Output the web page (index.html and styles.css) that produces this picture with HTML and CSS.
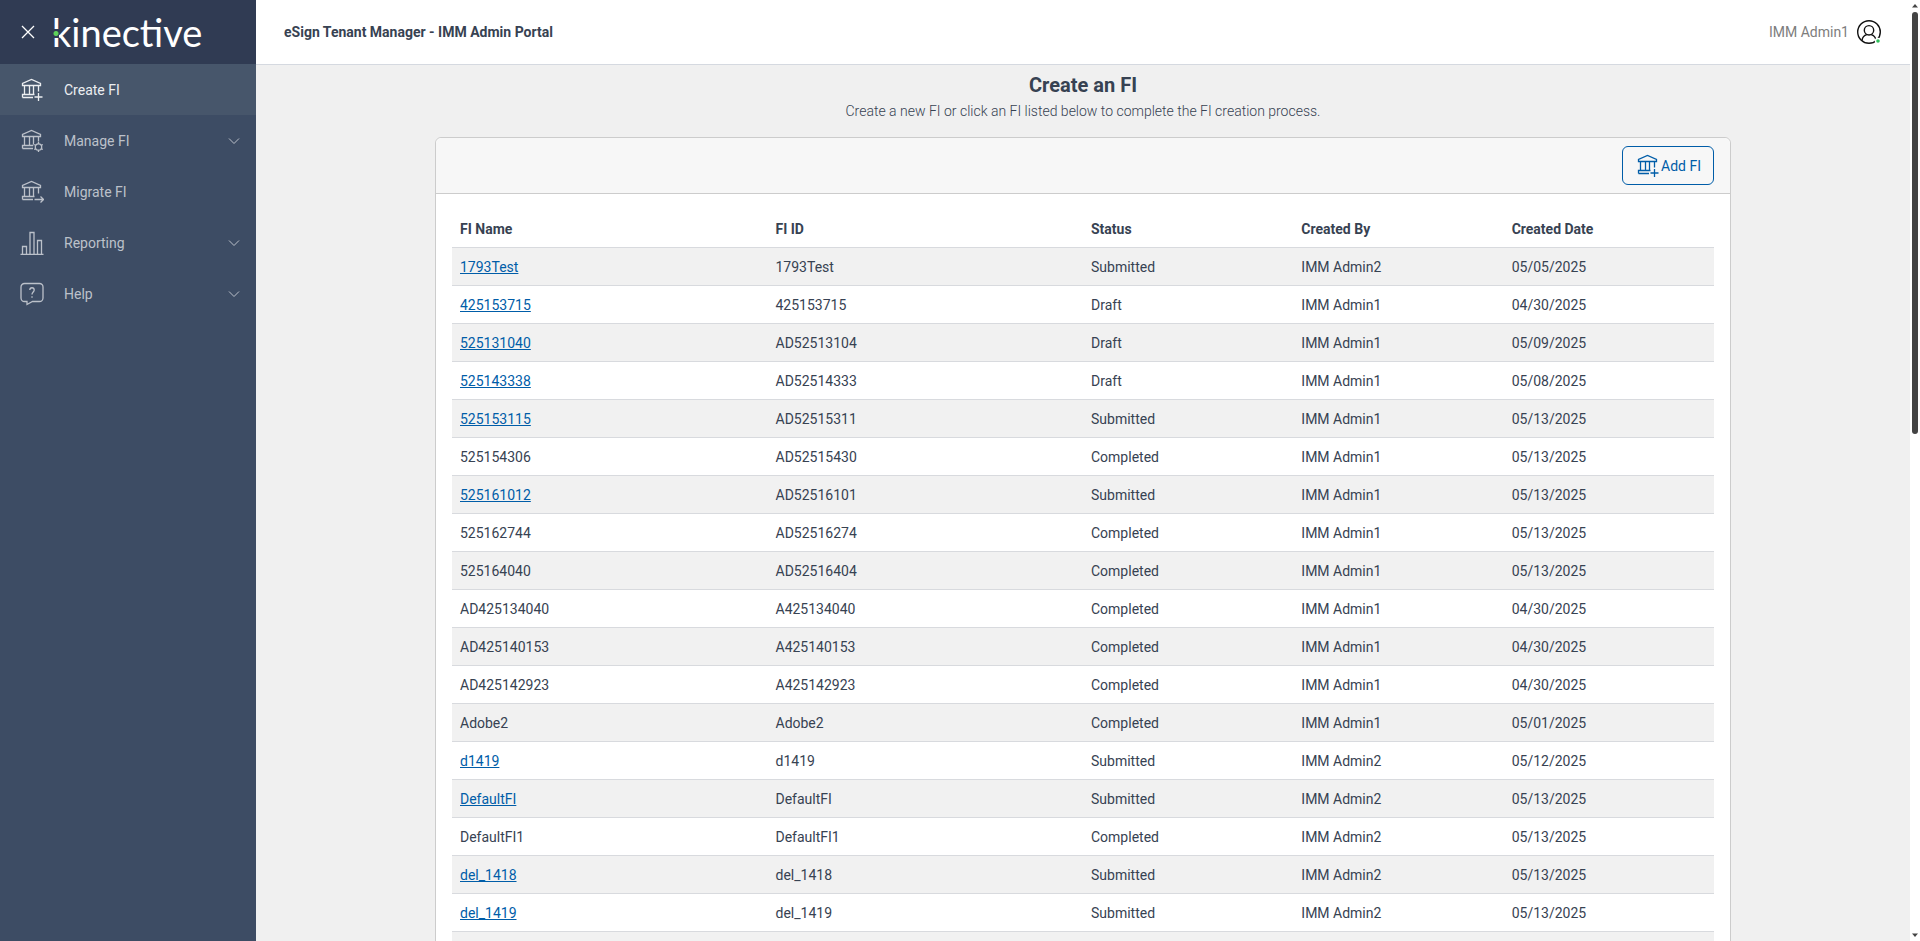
FILE: index.html
```html
<!DOCTYPE html>
<html lang="en">
<head>
  <meta charset="UTF-8">
  <title>eSign Tenant Manager</title>
  <link rel="stylesheet" href="styles.css">
</head>
<body>
  <svg class="symbols" aria-hidden="true">
    <symbol id="bank" viewBox="0 0 24 24">
      <path d="M2.500 7.500V5.500L11.500 1.500L20.500 5.500V7.500ZM4.500 7.500V16.500M9.500 7.500V16.500M13.500 7.500V16.500M18.500 7.500V13.500M2.500 19.500V16.500H14.500M2.500 19.500H13"/>
    </symbol>
    <symbol id="bank-plus" viewBox="0 0 24 24">
      <use href="#bank"/>
      <path d="M18.500 15V23M14.500 19H22.500"/>
    </symbol>
    <symbol id="chevron" viewBox="0 0 12 8">
      <path d="M1 1.5L6 6.5L11 1.5"/>
    </symbol>
  </svg>

  <nav class="sidebar">
    <div class="brand">
      <button class="close" aria-label="Close menu">
        <svg viewBox="0 0 14 14"><path d="M1 1L13 13M13 1L1 13"/></svg>
      </button>
      <a class="logo" href="#">kinective</a>
    </div>
    <a class="nav-item active" href="#">
      <svg class="icon"><use href="#bank-plus"/></svg>
      <span>Create FI</span>
    </a>
    <a class="nav-item" href="#">
      <svg class="icon" viewBox="0 0 24 24">
        <use href="#bank"/>
        <circle class="cutout" cx="18.500" cy="18" r="5.500"/>
        <path d="M18.500 13V15M18.500 21V23M14.200 15.500L16 16.500M21 19.500L22.800 20.500M14.200 20.500L16 19.500M21 16.500L22.800 15.500"/>
        <circle cx="18.500" cy="18" r="3.200"/>
      </svg>
      <span>Manage FI</span>
      <svg class="chevron"><use href="#chevron"/></svg>
    </a>
    <a class="nav-item" href="#">
      <svg class="icon" viewBox="0 0 24 24">
        <use href="#bank"/>
        <path d="M14.500 19.500H23.500M20.500 16.500L23.500 19.500L20.500 22.500"/>
      </svg>
      <span>Migrate FI</span>
    </a>
    <a class="nav-item" href="#">
      <svg class="icon" viewBox="0 0 24 24">
        <path d="M.5 23.500H23.500M2.500 23.500V15.500H6.500V23.500M10 23.500V1.500H14V23.500M17.500 23.500V9.500H21.500V23.500"/>
      </svg>
      <span>Reporting</span>
      <svg class="chevron"><use href="#chevron"/></svg>
    </a>
    <a class="nav-item" href="#">
      <svg class="icon" viewBox="0 0 24 24">
        <path d="M4.500 1.500H19.500A3.500 3.500 0 0 1 23 5V16A3.500 3.500 0 0 1 19.500 19.500H12.500L7 22.500V19.500H4.500A3.500 3.500 0 0 1 1 16V5A3.500 3.500 0 0 1 4.500 1.500Z"/>
        <path d="M9.800 8C9.800 5 14.200 5 14.200 8C14.200 10 12 10 12 12.500M12 14.300V15.800"/>
      </svg>
      <span>Help</span>
      <svg class="chevron"><use href="#chevron"/></svg>
    </a>
  </nav>

  <div class="page">
    <header class="topbar">
      <div class="app-name">eSign Tenant Manager - IMM Admin Portal</div>
      <a class="user" href="#">
        <span>IMM Admin1</span>
        <svg viewBox="0 0 24 24">
          <circle cx="12" cy="12" r="11.300"/>
          <circle cx="12" cy="10.300" r="4.700"/>
          <path d="M5 20.500C5.500 17 8 15.200 9.800 14.700M19 20.500C18.500 17 16 15.200 14.200 14.700"/>
          <circle class="online" cx="21" cy="21" r="2.500"/>
        </svg>
      </a>
    </header>

    <main>
      <h1>Create an FI</h1>
      <p class="intro">Create a new FI or click an FI listed below to complete the FI creation process.</p>

      <section class="card">
        <div class="card-header">
          <button class="add"><svg class="icon"><use href="#bank-plus"/></svg>Add FI</button>
        </div>
        <table>
          <thead>
            <tr><th class="wide">FI Name</th><th class="wide">FI ID</th><th>Status</th><th>Created By</th><th>Created Date</th></tr>
          </thead>
          <tbody>
            <tr><td><a href="#">1793Test</a></td><td>1793Test</td><td>Submitted</td><td>IMM Admin2</td><td>05/05/2025</td></tr>
            <tr><td><a href="#">425153715</a></td><td>425153715</td><td>Draft</td><td>IMM Admin1</td><td>04/30/2025</td></tr>
            <tr><td><a href="#">525131040</a></td><td>AD52513104</td><td>Draft</td><td>IMM Admin1</td><td>05/09/2025</td></tr>
            <tr><td><a href="#">525143338</a></td><td>AD52514333</td><td>Draft</td><td>IMM Admin1</td><td>05/08/2025</td></tr>
            <tr><td><a href="#">525153115</a></td><td>AD52515311</td><td>Submitted</td><td>IMM Admin1</td><td>05/13/2025</td></tr>
            <tr><td>525154306</td><td>AD52515430</td><td>Completed</td><td>IMM Admin1</td><td>05/13/2025</td></tr>
            <tr><td><a href="#">525161012</a></td><td>AD52516101</td><td>Submitted</td><td>IMM Admin1</td><td>05/13/2025</td></tr>
            <tr><td>525162744</td><td>AD52516274</td><td>Completed</td><td>IMM Admin1</td><td>05/13/2025</td></tr>
            <tr><td>525164040</td><td>AD52516404</td><td>Completed</td><td>IMM Admin1</td><td>05/13/2025</td></tr>
            <tr><td>AD425134040</td><td>A425134040</td><td>Completed</td><td>IMM Admin1</td><td>04/30/2025</td></tr>
            <tr><td>AD425140153</td><td>A425140153</td><td>Completed</td><td>IMM Admin1</td><td>04/30/2025</td></tr>
            <tr><td>AD425142923</td><td>A425142923</td><td>Completed</td><td>IMM Admin1</td><td>04/30/2025</td></tr>
            <tr><td>Adobe2</td><td>Adobe2</td><td>Completed</td><td>IMM Admin1</td><td>05/01/2025</td></tr>
            <tr><td><a href="#">d1419</a></td><td>d1419</td><td>Submitted</td><td>IMM Admin2</td><td>05/12/2025</td></tr>
            <tr><td><a href="#">DefaultFI</a></td><td>DefaultFI</td><td>Submitted</td><td>IMM Admin2</td><td>05/13/2025</td></tr>
            <tr><td>DefaultFI1</td><td>DefaultFI1</td><td>Completed</td><td>IMM Admin2</td><td>05/13/2025</td></tr>
            <tr><td><a href="#">del_1418</a></td><td>del_1418</td><td>Submitted</td><td>IMM Admin2</td><td>05/13/2025</td></tr>
            <tr><td><a href="#">del_1419</a></td><td>del_1419</td><td>Submitted</td><td>IMM Admin2</td><td>05/13/2025</td></tr>
            <tr><td></td><td></td><td></td><td></td><td></td></tr>
          </tbody>
        </table>
      </section>
    </main>
  </div>

  <div class="scrollbar" aria-hidden="true">
    <svg viewBox="0 0 6 4"><path d="M0 3.500L3 0L6 3.500Z"/></svg>
    <div class="track"><div class="thumb"></div></div>
    <svg viewBox="0 0 6 4"><path d="M0 .5L3 4L6 .5Z"/></svg>
  </div>
</body>
</html>
```
FILE: styles.css
```css
* { box-sizing: border-box; }
body {
  margin: 0; height: 100vh; overflow: hidden; display: flex;
  font: 14px/20px Roboto, Arial, sans-serif; color: #374252; background: #f0f0f0;
}
svg { fill: none; stroke: currentColor; flex: none; }
.symbols { position: absolute; width: 0; height: 0; }
.icon { width: 24px; height: 24px; stroke-width: 1.3; }

/* sidebar */
.sidebar { width: 256px; flex: none; background: #3d4c64; }
.brand { height: 64px; background: #303b53; display: flex; align-items: center; padding-left: 20px; }
.close { width: 16px; height: 16px; padding: 1px; margin-right: 16px; border: 0; background: none; color: #fff; }
.close svg { display: block; width: 14px; height: 14px; stroke-width: 1.3; }
.logo { position: relative; font: 38px/48px Lato, sans-serif; color: #fff; text-decoration: none; }
/* green dot splitting the stem of the k */
.logo::before {
  content: ""; position: absolute; left: 1px; top: 21px; width: 6px; height: 9px;
  background: radial-gradient(circle, #5fd35a 2px, #303b53 3px);
}
.nav-item {
  display: flex; align-items: center; height: 51px; padding: 0 16px 0 20px;
  color: #bcc1ca; text-decoration: none;
}
.nav-item span { flex: 1; margin-left: 20px; }
.nav-item.active { background: #47566b; color: #eceef1; }
.chevron { width: 12px; height: 8px; }
.cutout { fill: #3d4c64; stroke: none; }

/* content */
.page { flex: 1; min-width: 0; }
.topbar {
  display: flex; justify-content: space-between; align-items: center; height: 65px;
  padding: 0 29px 0 28px; background: #fff; border-bottom: 1px solid #d5d9e0;
}
.app-name { font-weight: 700; }
.user { display: flex; align-items: center; gap: 8px; color: #7d7d7d; text-decoration: none; }
.user svg { width: 24px; height: 24px; overflow: visible; stroke: #111; stroke-width: 1.4; }
.user .online { fill: #2fc25b; stroke: #fff; }
main { padding: 8px 16px; }
h1 { margin: 0; font-size: 20px; line-height: 24px; text-align: center; }
.intro { margin: 4px 0 16px; font-weight: 300; text-align: center; }
.card { max-width: 1296px; margin: 0 auto; background: #fff; border: 1px solid #ccc; border-radius: 6px; }
.card-header {
  display: flex; justify-content: flex-end; padding: 8px 16px;
  background: #f7f7f7; border-bottom: 1px solid #ccc; border-radius: 6px 6px 0 0;
}
.add {
  display: flex; align-items: center; gap: 1px; height: 39px; padding: 0 12px 0 13px;
  font: inherit; color: #005da8; background: #f7f7f7; border: 1px solid #005da8; border-radius: 6px;
}
table { width: calc(100% - 32px); margin: 16px; border-spacing: 0; table-layout: fixed; }
th, td { padding: 0 8px; text-align: left; }
th { height: 37px; }
td { height: 38px; border-top: 1px solid #d8dade; }
.wide { width: 25%; }
tbody tr:nth-child(odd) { background: #f1f1f1; }
td a { color: #005da8; }

/* scrollbar */
.scrollbar {
  width: 10px; padding: 4px 2px; display: flex; flex-direction: column; gap: 4px; background: #fff;
}
.scrollbar svg { width: 6px; height: 4px; fill: #444; stroke: none; }
.track { flex: 1; }
.thumb { height: 46%; border-radius: 3px; background: #444; }
```
